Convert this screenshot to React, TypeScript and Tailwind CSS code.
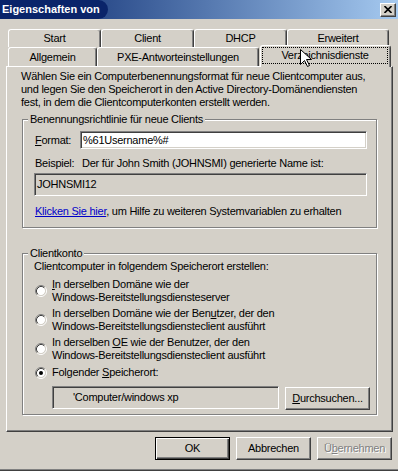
import React from 'react';

function U({ children }: { children: React.ReactNode }) {
  return <span className="underline decoration-1 underline-offset-[1px]">{children}</span>;
}

function Radio({ checked }: { checked?: boolean }) {
  return (
    <svg width="12" height="12" viewBox="0 0 12 12" className="shrink-0">
      <circle cx="6" cy="6" r="4.2" fill="#fff" />
      <path d="M2.11 9.89 A5.5 5.5 0 0 1 9.89 2.11" fill="none" stroke="#808080" />
      <path d="M9.89 2.11 A5.5 5.5 0 0 1 2.11 9.89" fill="none" stroke="#fff" />
      <path d="M2.82 9.18 A4.5 4.5 0 0 1 9.18 2.82" fill="none" stroke="#404040" />
      <path d="M9.18 2.82 A4.5 4.5 0 0 1 2.82 9.18" fill="none" stroke="#d4d0c8" />
      {checked && <circle cx="6" cy="6" r="2" fill="#000" />}
    </svg>
  );
}

function Tab({ label, className }: { label: string; className: string }) {
  return (
    <div
      className={`flex items-center justify-center rounded-t-[3px] border-t border-l border-r border-t-white border-l-white border-r-[#404040] shadow-[inset_-1px_0_0_#808080] ${className}`}
    >
      {label}
    </div>
  );
}

function Button({ children, className = '', isDefault, disabled }: { children: React.ReactNode; className?: string; isDefault?: boolean; disabled?: boolean }) {
  const frame = isDefault
    ? 'border border-black shadow-[inset_1px_1px_0_#fff,inset_-1px_-1px_0_#404040,inset_-2px_-2px_0_#808080]'
    : 'border border-t-white border-l-white border-b-[#404040] border-r-[#404040] shadow-[inset_-1px_-1px_0_#808080]';
  return (
    <div className={`flex h-[23px] items-center justify-center ${frame} ${className}`}>
      <span className={disabled ? 'text-[#808080] [text-shadow:1px_1px_0_#fff]' : ''}>{children}</span>
    </div>
  );
}

function GroupBox({ label, className, children }: { label: string; className: string; children: React.ReactNode }) {
  return (
    <div className={`relative flex flex-col border border-[#808080] shadow-[inset_1px_1px_0_#fff,1px_1px_0_#fff] ${className}`}>
      <span className="absolute -top-[7px] left-[5px] bg-[#d4d0c8] px-[2px] leading-[13px]">{label}</span>
      {children}
    </div>
  );
}

const sunken =
  'border border-t-[#808080] border-l-[#808080] border-b-white border-r-white shadow-[inset_1px_1px_0_#404040,inset_-1px_-1px_0_#d4d0c8]';

export default function App() {
  return (
    <div className="relative flex h-[471px] w-[398px] flex-col overflow-hidden border-b border-[#404040] bg-[#d4d0c8] font-['Liberation_Sans',Arial,sans-serif] text-[11px] leading-[13px] tracking-[-0.25px] text-black shadow-[inset_0_-1px_0_#808080]">
      {/* title bar */}
      <div className="flex h-[19px] shrink-0 items-center justify-between bg-gradient-to-r from-[#0a246a] to-[#a6caf0]">
        <div className="flex h-full items-center rounded-r-[10px] bg-[#0a246a] pl-[2px] pr-[8px] text-[11px] font-bold tracking-normal text-white">
          Eigenschaften von
        </div>
        <div className="mr-[2px] flex h-[14px] w-[16px] items-center justify-center border border-t-white border-l-white border-b-[#404040] border-r-[#404040] bg-[#d4d0c8] shadow-[inset_-1px_-1px_0_#808080]">
          <svg width="8" height="7" viewBox="0 0 8 7">
            <path d="M0.5 0 L7.5 7 M7.5 0 L0.5 7" stroke="#000" strokeWidth="1.6" />
          </svg>
        </div>
      </div>

      {/* tabs */}
      <div className="mt-[10px] flex h-[18px] pl-[8px]">
        <Tab label="Start" className="w-[93px]" />
        <Tab label="Client" className="w-[93px]" />
        <Tab label="DHCP" className="w-[93px]" />
        <Tab label="Erweitert" className="w-[102px]" />
      </div>
      <div className="flex h-[19px] items-end pl-[8px]">
        <Tab label="Allgemein" className="h-[19px] w-[89px]" />
        <Tab label="PXE-Antworteinstellungen" className="h-[19px] w-[162px]" />
        <div className="relative z-10 -mb-[1px] ml-[1px] flex h-[22px] w-[131px] rounded-t-[3px] border-t border-l border-r border-t-white border-l-white border-r-[#404040] bg-[#d4d0c8] shadow-[inset_-1px_0_0_#808080]">
          <div className="ml-[1px] mr-[2px] mt-[1px] flex h-[17px] flex-1 items-center justify-center border border-dotted border-black">
            Verzeichnisdienste
          </div>
        </div>
      </div>

      {/* panel */}
      <div className="ml-[6px] flex h-[366px] w-[387px] shrink-0 flex-col border border-t-white border-l-white border-b-[#404040] border-r-[#404040] shadow-[inset_-1px_-1px_0_#808080]">
        <p className="ml-[14px] mt-[3px] whitespace-nowrap">
          Wählen Sie ein Computerbenennungsformat für neue Clientcomputer aus,
          <br />
          und legen Sie den Speicherort in den Active Directory-Domänendiensten
          <br />
          fest, in dem die Clientcomputerkonten erstellt werden.
        </p>

        <GroupBox label="Benennungsrichtlinie für neue Clients" className="ml-[15px] mt-[10px] h-[109px] w-[355px]">
          <div className="ml-[12px] mt-[11px] flex h-[18px] items-center">
            <span className="w-[45px]">
              <U>F</U>ormat:
            </span>
            <div className={`flex h-[18px] w-[287px] items-center bg-white pl-[2px] ${sunken}`}>%61Username%#</div>
          </div>
          <div className="ml-[12px] mt-[8px] flex">
            <span className="w-[47px]">Beispiel:</span>
            <span>Der für John Smith (JOHNSMI) generierte Name ist:</span>
          </div>
          <div className={`ml-[11px] mt-[3px] flex h-[23px] w-[333px] items-center pl-[2px] ${sunken}`}>JOHNSMI12</div>
          <div className="ml-[12px] mt-[9px]">
            <span className="text-[#0000c8] underline decoration-1 underline-offset-[1px]">Klicken Sie hier</span>, um Hilfe zu weiteren
            Systemvariablen zu erhalten
          </div>
        </GroupBox>

        <GroupBox label="Clientkonto" className="ml-[15px] mt-[25px] h-[162px] w-[355px]">
          <div className="ml-[11px] mt-[6px]">Clientcomputer in folgendem Speicherort erstellen:</div>
          <div className="ml-[12px] mt-[5px] flex items-center gap-[5px]">
            <Radio />
            <div>
              <U>I</U>n derselben Domäne wie der
              <br />
              Windows-Bereitstellungsdiensteserver
            </div>
          </div>
          <div className="ml-[12px] mt-[3px] flex items-center gap-[5px]">
            <Radio />
            <div>
              In derselben Domäne wie der Ben<U>u</U>tzer, der den
              <br />
              Windows-Bereitstellungsdiensteclient ausführt
            </div>
          </div>
          <div className="ml-[12px] mt-[3px] flex items-center gap-[5px]">
            <Radio />
            <div>
              In derselben <U>O</U>E wie der Benutzer, der den
              <br />
              Windows-Bereitstellungsdiensteclient ausführt
            </div>
          </div>
          <div className="ml-[12px] mt-[4px] flex items-center gap-[5px]">
            <Radio checked />
            <div>
              Folgender <U>S</U>peicherort:
            </div>
          </div>
          <div className="ml-[29px] mt-[7px] flex items-start">
            <div className={`flex h-[23px] w-[227px] items-center pl-[20px] ${sunken}`}>'Computer/windows xp</div>
            <Button className="ml-[6px] mt-[1px] w-[85px]">
              <U>D</U>urchsuchen...
            </Button>
          </div>
        </GroupBox>
      </div>

      {/* dialog buttons */}
      <div className="mt-[5px] flex justify-end gap-[6px] pr-[6px]">
        <Button isDefault className="w-[75px]">
          OK
        </Button>
        <Button className="w-[75px]">Abbrechen</Button>
        <Button disabled className="w-[75px]">
          Ü<U>b</U>ernehmen
        </Button>
      </div>

      {/* mouse pointer */}
      <svg className="absolute left-[300px] top-[49px] z-20" width="13" height="19" viewBox="0 0 13 19">
        <polygon points="0.5,0.5 0.5,15.5 4.5,11.5 7.5,17.5 9.5,16.5 6.5,10.5 11.5,10.5" fill="#fff" stroke="#000" />
      </svg>
    </div>
  );
}
